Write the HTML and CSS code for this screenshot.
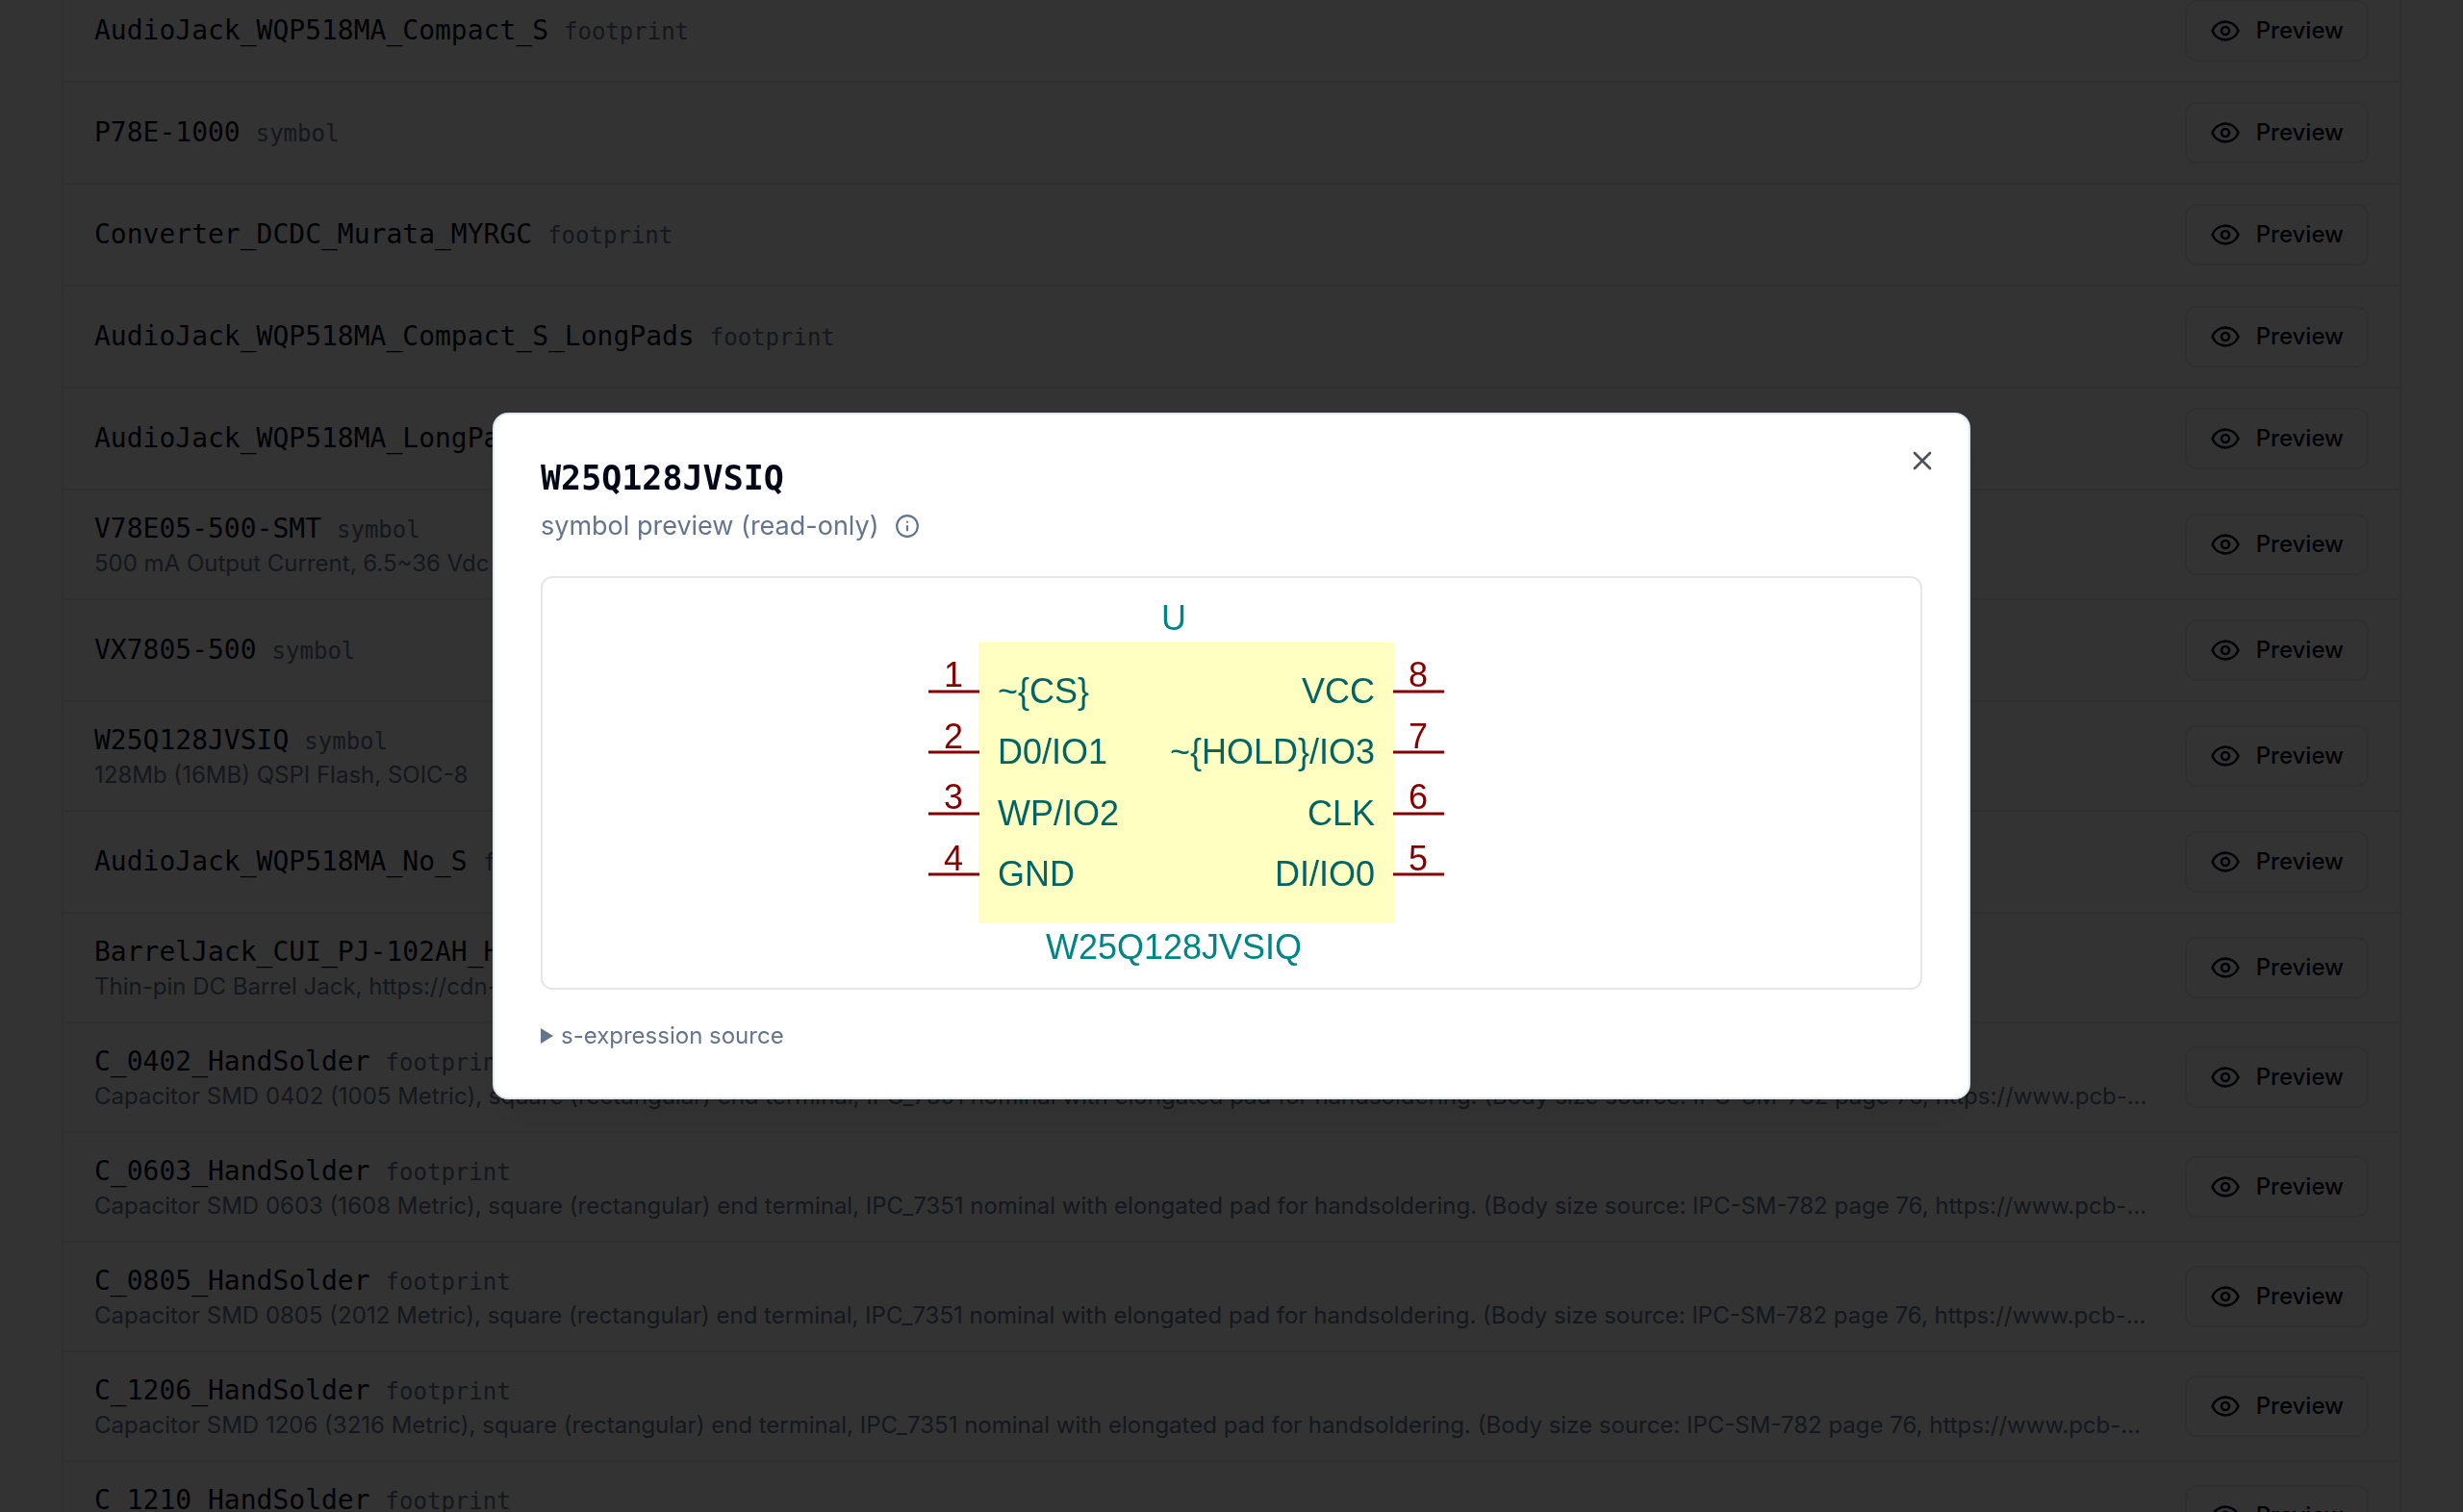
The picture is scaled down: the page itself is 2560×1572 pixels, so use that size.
FILE: index.html
```html
<!DOCTYPE html>
<html lang="en">
<head>
<meta charset="utf-8">
<title>W25Q128JVSIQ preview</title>
<link rel="stylesheet" href="styles.css">
</head>
<body>
<svg class="sprite" aria-hidden="true">
  <symbol id="eye" viewBox="0 0 24 24">
    <path d="M2.062 12.348a1 1 0 0 1 0-.696 10.75 10.75 0 0 1 19.876 0 1 1 0 0 1 0 .696 10.75 10.75 0 0 1-19.876 0"/>
    <circle cx="12" cy="12" r="3"/>
  </symbol>
</svg>

<main class="page">
  <ul class="parts">
    <li class="part">
      <div class="part-info"><div class="part-head"><span class="part-name">AudioJack_WQP518MA_Compact_S</span><span class="part-kind">footprint</span></div></div>
      <button class="preview" type="button"><svg class="icon"><use href="#eye"/></svg>Preview</button>
    </li>
    <li class="part">
      <div class="part-info"><div class="part-head"><span class="part-name">P78E-1000</span><span class="part-kind">symbol</span></div></div>
      <button class="preview" type="button"><svg class="icon"><use href="#eye"/></svg>Preview</button>
    </li>
    <li class="part">
      <div class="part-info"><div class="part-head"><span class="part-name">Converter_DCDC_Murata_MYRGC</span><span class="part-kind">footprint</span></div></div>
      <button class="preview" type="button"><svg class="icon"><use href="#eye"/></svg>Preview</button>
    </li>
    <li class="part">
      <div class="part-info"><div class="part-head"><span class="part-name">AudioJack_WQP518MA_Compact_S_LongPads</span><span class="part-kind">footprint</span></div></div>
      <button class="preview" type="button"><svg class="icon"><use href="#eye"/></svg>Preview</button>
    </li>
    <li class="part">
      <div class="part-info"><div class="part-head"><span class="part-name">AudioJack_WQP518MA_LongPads</span><span class="part-kind">footprint</span></div></div>
      <button class="preview" type="button"><svg class="icon"><use href="#eye"/></svg>Preview</button>
    </li>
    <li class="part">
      <div class="part-info"><div class="part-head"><span class="part-name">V78E05-500-SMT</span><span class="part-kind">symbol</span></div>
      <p class="part-desc">500 mA Output Current, 6.5~36 Vdc</p></div>
      <button class="preview" type="button"><svg class="icon"><use href="#eye"/></svg>Preview</button>
    </li>
    <li class="part">
      <div class="part-info"><div class="part-head"><span class="part-name">VX7805-500</span><span class="part-kind">symbol</span></div></div>
      <button class="preview" type="button"><svg class="icon"><use href="#eye"/></svg>Preview</button>
    </li>
    <li class="part">
      <div class="part-info"><div class="part-head"><span class="part-name">W25Q128JVSIQ</span><span class="part-kind">symbol</span></div>
      <p class="part-desc">128Mb (16MB) QSPI Flash, SOIC-8</p></div>
      <button class="preview" type="button"><svg class="icon"><use href="#eye"/></svg>Preview</button>
    </li>
    <li class="part">
      <div class="part-info"><div class="part-head"><span class="part-name">AudioJack_WQP518MA_No_S</span><span class="part-kind">footprint</span></div></div>
      <button class="preview" type="button"><svg class="icon"><use href="#eye"/></svg>Preview</button>
    </li>
    <li class="part">
      <div class="part-info"><div class="part-head"><span class="part-name">BarrelJack_CUI_PJ-102AH_Horizontal</span><span class="part-kind">footprint</span></div>
      <p class="part-desc">Thin-pin DC Barrel Jack, https://cdn-shop</p></div>
      <button class="preview" type="button"><svg class="icon"><use href="#eye"/></svg>Preview</button>
    </li>
    <li class="part">
      <div class="part-info"><div class="part-head"><span class="part-name">C_0402_HandSolder</span><span class="part-kind">footprint</span></div>
      <p class="part-desc">Capacitor SMD 0402 (1005 Metric), square (rectangular) end terminal, IPC_7351 nominal with elongated pad for handsoldering. (Body size source: IPC-SM-782 page 76, https://www.pcb-…</p></div>
      <button class="preview" type="button"><svg class="icon"><use href="#eye"/></svg>Preview</button>
    </li>
    <li class="part">
      <div class="part-info"><div class="part-head"><span class="part-name">C_0603_HandSolder</span><span class="part-kind">footprint</span></div>
      <p class="part-desc">Capacitor SMD 0603 (1608 Metric), square (rectangular) end terminal, IPC_7351 nominal with elongated pad for handsoldering. (Body size source: IPC-SM-782 page 76, https://www.pcb-…</p></div>
      <button class="preview" type="button"><svg class="icon"><use href="#eye"/></svg>Preview</button>
    </li>
    <li class="part">
      <div class="part-info"><div class="part-head"><span class="part-name">C_0805_HandSolder</span><span class="part-kind">footprint</span></div>
      <p class="part-desc">Capacitor SMD 0805 (2012 Metric), square (rectangular) end terminal, IPC_7351 nominal with elongated pad for handsoldering. (Body size source: IPC-SM-782 page 76, https://www.pcb-…</p></div>
      <button class="preview" type="button"><svg class="icon"><use href="#eye"/></svg>Preview</button>
    </li>
    <li class="part">
      <div class="part-info"><div class="part-head"><span class="part-name">C_1206_HandSolder</span><span class="part-kind">footprint</span></div>
      <p class="part-desc">Capacitor SMD 1206 (3216 Metric), square (rectangular) end terminal, IPC_7351 nominal with elongated pad for handsoldering. (Body size source: IPC-SM-782 page 76, https://www.pcb-…</p></div>
      <button class="preview" type="button"><svg class="icon"><use href="#eye"/></svg>Preview</button>
    </li>
    <li class="part">
      <div class="part-info"><div class="part-head"><span class="part-name">C_1210_HandSolder</span><span class="part-kind">footprint</span></div>
      <p class="part-desc">Capacitor SMD 1210 (3225 Metric), square (rectangular) end terminal, IPC_7351 nominal with elongated pad for handsoldering. (Body size source: IPC-SM-782 page 76, https://www.pcb-…</p></div>
      <button class="preview" type="button"><svg class="icon"><use href="#eye"/></svg>Preview</button>
    </li>
  </ul>
</main>

<div class="overlay">
  <section class="dialog" role="dialog" aria-modal="true" aria-labelledby="dialog-title">
    <header class="dialog-head">
      <h2 class="dialog-title" id="dialog-title">W25Q128JVSIQ</h2>
      <p class="dialog-sub">symbol preview (read-only)
        <svg class="info" viewBox="0 0 24 24" role="img" aria-label="Info"><circle cx="12" cy="12" r="10"/><path d="M12 16v-4M12 8h.01"/></svg>
      </p>
    </header>
    <figure class="canvas">
      <svg class="schematic" viewBox="0 -1 1432 426" role="img" aria-label="W25Q128JVSIQ schematic symbol">
        <rect class="body" x="453" y="66" width="432" height="292"/>
        <path class="pins" d="M401 117h53M401 180h53M401 244h53M401 307h53M884 117h53M884 180h53M884 244h53M884 307h53"/>
        <g class="field"><text x="656" y="53">U</text><text x="656" y="395">W25Q128JVSIQ</text></g>
        <g class="number">
          <text x="427" y="112">1</text><text x="427" y="176">2</text><text x="427" y="239">3</text><text x="427" y="303">4</text>
          <text x="910" y="112">8</text><text x="910" y="176">7</text><text x="910" y="239">6</text><text x="910" y="303">5</text>
        </g>
        <g class="name"><text x="473" y="129">~{CS}</text><text x="473" y="192">D0/IO1</text><text x="473" y="256">WP/IO2</text><text x="473" y="319">GND</text></g>
        <g class="name name-end"><text x="865" y="129">VCC</text><text x="865" y="192">~{HOLD}/IO3</text><text x="865" y="256">CLK</text><text x="865" y="319">DI/IO0</text></g>
      </svg>
    </figure>
    <details class="source">
      <summary class="source-toggle">s-expression source</summary>
    </details>
    <button class="close" type="button" aria-label="Close"><svg class="icon" viewBox="0 0 24 24"><path d="M18 6 6 18M6 6l12 12"/></svg></button>
  </section>
</div>
</body>
</html>
```
FILE: styles.css
```css
:root {
  --ink: #020817;
  --muted: #64748b;
  --line: #e2e8f0;
  --sans: Inter, "Liberation Sans", sans-serif;
  --mono: "DejaVu Sans Mono", "Liberation Mono", monospace;
}

* { box-sizing: border-box; }

html, body { height: 100%; }

body {
  margin: 0;
  overflow: hidden;
  background: #fff;
  color: var(--ink);
  font: 28px/40px var(--sans);
}

p, h2, ul, figure { margin: 0; padding: 0; }

.sprite { display: none; }

.icon, .info {
  fill: none;
  stroke: currentColor;
  stroke-width: 2;
  stroke-linecap: round;
  stroke-linejoin: round;
}

.icon { width: 32px; height: 32px; flex: none; }

/* List, scrolled part of the way through its first row */
.page { padding: 0 64px; margin-top: -20px; }

.parts {
  list-style: none;
  border: 2px solid var(--line);
  border-width: 0 2px;
}

.part {
  display: flex;
  align-items: center;
  gap: 32px;
  padding: 20px 32px;
  border-bottom: 2px solid var(--line);
}

.part-info { flex: 1; min-width: 0; }

.part-head { display: flex; align-items: baseline; gap: 16px; }

.part-name { font-family: var(--mono); }

.part-kind {
  font-family: var(--mono);
  font-size: 24px;
  line-height: 32px;
  color: var(--muted);
}

.part-desc {
  font-size: 24px;
  line-height: 32px;
  color: var(--muted);
  white-space: nowrap;
  overflow: hidden;
  text-overflow: ellipsis;
}

.preview {
  display: flex;
  align-items: center;
  gap: 16px;
  height: 64px;
  padding: 0 24px;
  border: 2px solid var(--line);
  border-radius: 12px;
  background: #fff;
  color: var(--ink);
  font: 500 24px/32px var(--sans);
}

/* Dialog */
.overlay {
  position: fixed;
  inset: 0;
  display: grid;
  place-items: center;
  background: rgba(0, 0, 0, 0.8);
}

.dialog {
  position: relative;
  display: grid;
  gap: 32px;
  width: 100%;
  max-width: 1536px;
  padding: 48px;
  border: 2px solid var(--line);
  border-radius: 16px;
  background: #fff;
  box-shadow: 0 20px 30px -6px rgba(0, 0, 0, 0.1), 0 8px 12px -8px rgba(0, 0, 0, 0.1);
}

.dialog-head { display: grid; gap: 12px; }

.dialog-title { font: 700 35px/36px var(--mono); }

.dialog-sub {
  display: flex;
  align-items: center;
  gap: 16px;
  color: var(--muted);
  font-size: 27px;
}

.info { width: 26px; height: 26px; }

.canvas { border: 2px solid #e5e7eb; border-radius: 12px; }

.schematic {
  display: block;
  width: 100%;
  font: 36px "Liberation Sans", Arial, sans-serif;
}

.body { fill: #ffffc2; }
.pins { stroke: #840000; stroke-width: 3; }
.field { fill: #008484; text-anchor: middle; }
.number { fill: #840000; text-anchor: middle; }
.name { fill: #006464; }
.name-end { text-anchor: end; }

.source { color: var(--muted); font-size: 24px; line-height: 32px; }

.source-toggle {
  display: flex;
  align-items: center;
  gap: 8px;
  list-style: none;
}

.source-toggle::before {
  content: "";
  width: 13px;
  height: 16px;
  background: currentColor;
  clip-path: polygon(0 0, 100% 50%, 0 100%);
}

.close {
  position: absolute;
  top: 32px;
  right: 32px;
  display: flex;
  padding: 0;
  border: 0;
  background: none;
  color: var(--ink);
  opacity: 0.7;
}
```
